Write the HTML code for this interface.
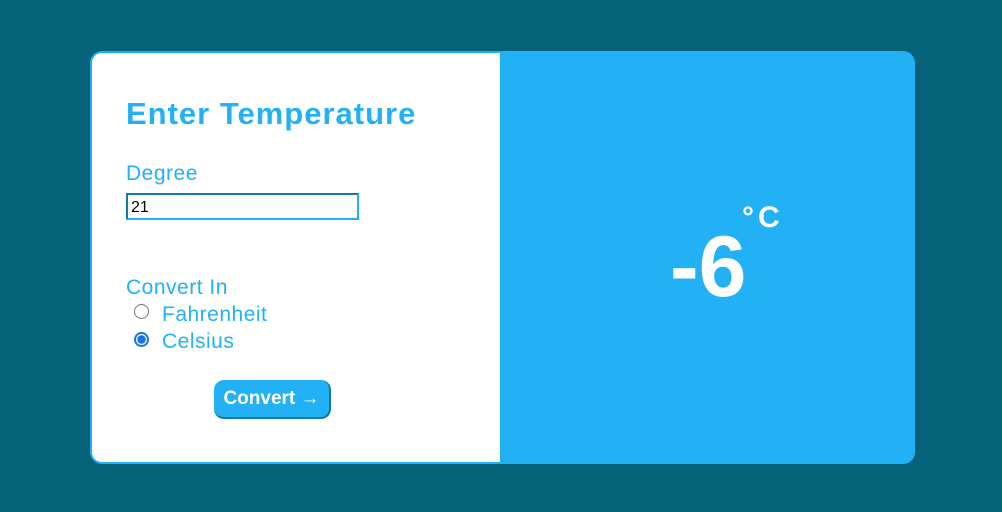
<!DOCTYPE html>
<html><head><style>
body{margin:0;width:1002px;height:512px;background:#066278;font-family:"Liberation Sans",sans-serif;position:relative;overflow:hidden}
.card{position:absolute;left:90px;top:51px;width:825px;height:413px;background:#22b1f5;border-radius:12px}
.left{position:absolute;left:92px;top:53px;width:408px;height:409px;background:#fff;border-radius:10px 0 0 10px}
.t{position:absolute;color:#22b1f5;white-space:nowrap;letter-spacing:0.5px}
input{position:absolute;left:126px;top:193px;width:233px;height:27px;box-sizing:border-box;border:2px solid #22b1f5;border-top-color:#127aa0;border-left-color:#127aa0;font:16px "Liberation Sans",sans-serif;padding:3px 3px 0;margin:0;outline:none}
.r{position:absolute;width:15px;height:15px;border-radius:50%;box-sizing:border-box}
.btn{position:absolute;left:214px;top:380px;width:117px;height:39px;box-sizing:border-box;background:#22b1f5;border-radius:10px;border-bottom:2px solid #127aa0;border-right:2px solid #127aa0;color:#fff;font-weight:bold;font-size:19px;text-align:center;line-height:38px}
</style></head><body>
<div class="card"></div>
<div class="left"></div>
<div class="t" style="left:126px;top:96px;font-size:31px;font-weight:bold;letter-spacing:1px">Enter Temperature</div>
<div class="t" style="left:126px;top:162px;font-size:21px">Degree</div>
<input value="21">
<div class="t" style="left:126px;top:276px;font-size:21px">Convert In</div>
<div class="r" style="left:134px;top:304px;border:1.5px solid #777"></div>
<div class="t" style="left:162px;top:303px;font-size:21px">Fahrenheit</div>
<div class="r" style="left:134px;top:332px;border:2px solid #1a73e8;background:radial-gradient(circle,#1a73e8 0 4px,#fff 4.5px)"></div>
<div class="t" style="left:162px;top:330px;font-size:21px">Celsius</div>
<div class="btn">Convert →</div>
<div style="position:absolute;left:670px;top:224px;color:#fff;font-weight:bold;font-size:86px;line-height:1">-6</div>
<div style="position:absolute;left:742px;top:203px;color:#fff;font-weight:bold;font-size:30px;line-height:1;letter-spacing:4px">°C</div>
</body></html>
